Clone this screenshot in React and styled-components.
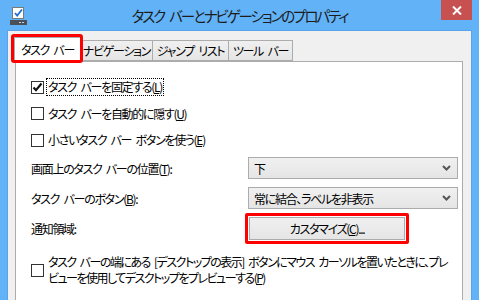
import React from 'react'
import styled, { createGlobalStyle } from 'styled-components'

const GlobalStyle = createGlobalStyle`
  html, body {
    margin: 0;
    padding: 0;
    background: #62b2f7;
  }
  body {
    font-family: "Noto Sans CJK JP", "Noto Sans", sans-serif;
    font-feature-settings: "palt";
    color: #000;
  }
`

const Window = styled.div`
  width: 479px;
  height: 300px;
  overflow: hidden;
  background: #62b2f7;
  display: flex;
  flex-direction: column;
`

const TitleBar = styled.div`
  height: 30px;
  flex: none;
  display: grid;
  grid-template-columns: 1fr auto 1fr;
  align-items: center;
`

const AppIcon = styled.svg`
  margin-left: 10px;
  margin-top: 1px;
  display: block;
`

const Title = styled.div`
  font-size: 14.5px;
  letter-spacing: -2.1px;
  word-spacing: 4px;
  color: #1c1c1c;
  padding-top: 1px;
  white-space: nowrap;
`

const CloseButton = styled.div`
  justify-self: end;
  align-self: start;
  margin-right: 7px;
  width: 31px;
  height: 20px;
  background: #c75050;
  display: flex;
  align-items: center;
  justify-content: center;
`

const Body = styled.div`
  flex: 1;
  margin: 0 7px;
  background: #f0f0f0;
  border: 1px solid #58a3ea;
  border-bottom: none;
  padding: 6px 8px 0 7px;
  display: flex;
  flex-direction: column;
  font-size: 12px;
  letter-spacing: -1.3px;
  word-spacing: 3px;
`

const TabRow = styled.div`
  display: flex;
  align-items: flex-end;
  height: 24px;
  margin-left: -1px;
`

const Tab = styled.div`
  position: relative;
  box-sizing: border-box;
  width: ${(p) => p.w}px;
  height: ${(p) => (p.active ? 25 : 21)}px;
  margin-left: ${(p) => (p.active ? 0 : -1)}px;
  margin-bottom: ${(p) => (p.active ? -1 : 0)}px;
  z-index: ${(p) => (p.active ? 2 : 1)};
  border: 1px solid #acacac;
  border-bottom: ${(p) => (p.active ? 'none' : '1px solid #acacac')};
  background: ${(p) => (p.active ? '#fff' : 'linear-gradient(#f0f0f0, #e5e5e5)')};
  display: flex;
  align-items: center;
  justify-content: center;
  padding-bottom: ${(p) => (p.active ? 2 : 0)}px;
  white-space: nowrap;
`

const TabMark = styled.span`
  position: absolute;
  top: -4px;
  left: -4px;
  right: -3px;
  bottom: -1px;
  border: 3px solid #ff0000;
  border-radius: 3px;
  pointer-events: none;
`

const Panel = styled.div`
  flex: 1;
  background: #fff;
  border: 1px solid #acacac;
  border-bottom: none;
  padding: 16px 0 0 15px;
  display: flex;
  flex-direction: column;
`

const CheckList = styled.div`
  display: flex;
  flex-direction: column;
  gap: 8.5px;
`

const CheckRow = styled.div`
  display: flex;
  align-items: center;
  height: 18px;
`

const Box = styled.span`
  box-sizing: border-box;
  width: 13px;
  height: 13px;
  flex: none;
  border: 1px solid #333;
  background: #fff;
  display: flex;
  align-items: center;
  justify-content: center;
  margin-right: 2px;
`

const Label = styled.span`
  padding: 0 1px;
  line-height: 16px;
  border: 1px dotted ${(p) => (p.focused ? '#000' : 'transparent')};
  white-space: nowrap;
`

const Settings = styled.div`
  display: grid;
  grid-template-columns: 217px 210px;
  grid-template-rows: 22px 22px 23px;
  row-gap: 8px;
  align-items: center;
  margin-top: 8px;
`

const Select = styled.div`
  box-sizing: border-box;
  height: 22px;
  border: 1px solid #acacac;
  background: linear-gradient(#f0f0f0, #e5e5e5);
  display: flex;
  align-items: center;
  justify-content: space-between;
  padding: 0 6px 0 5px;
  white-space: nowrap;
`

const Button = styled.div`
  position: relative;
  box-sizing: border-box;
  width: 156px;
  height: 23px;
  margin-left: 1px;
  margin-top: -1px;
  border: 1px solid #acacac;
  background: linear-gradient(#f0f0f0, #e5e5e5);
  display: flex;
  align-items: center;
  justify-content: center;
  white-space: nowrap;
`

const ButtonMark = styled.span`
  position: absolute;
  inset: -5px;
  border: 3px solid #ff0000;
  border-radius: 2px;
  pointer-events: none;
`

const WrapRow = styled.div`
  display: flex;
  align-items: center;
  margin-top: 14px;
`

const WrapText = styled.span`
  line-height: 16px;
  padding-left: 2px;
  letter-spacing: -1.5px;
  white-space: nowrap;
`

const Check = () => (
  <svg width="11" height="11" viewBox="0 0 11 11">
    <path d="M1.5 5.5 L4 8.2 L9.5 1.5" fill="none" stroke="#111" strokeWidth="2.2" />
  </svg>
)

const Chevron = () => (
  <svg width="9" height="6" viewBox="0 0 9 6">
    <path d="M1 1 L4.5 4.5 L8 1" fill="none" stroke="#555" strokeWidth="2" />
  </svg>
)

const tabs = [
  { label: 'タスク バー', w: 67, active: true },
  { label: 'ナビゲーション', w: 73 },
  { label: 'ジャンプ リスト', w: 77 },
  { label: 'ツール バー', w: 65 },
]

const App = () => {
  return (
    <Window>
      <GlobalStyle />
      <TitleBar>
        <AppIcon width="17" height="18" viewBox="0 0 17 18">
          <rect x="2.5" y="0.5" width="11" height="11" fill="#fff" stroke="#7a7a7a" />
          <path d="M5 6 L7.2 8.5 L12 2.5" fill="none" stroke="#1d6fd1" strokeWidth="1.8" />
          <rect x="0" y="13" width="17" height="5" fill="#4a4f58" />
          <rect x="9" y="15" width="2" height="1" fill="#c9d2dc" />
          <rect x="12" y="15" width="2" height="1" fill="#c9d2dc" />
        </AppIcon>
        <Title>タスク バーとナビゲーションのプロパティ</Title>
        <CloseButton>
          <svg width="10" height="9" viewBox="0 0 10 9">
            <path d="M1 0.5 L9 8.5 M9 0.5 L1 8.5" stroke="#fff" strokeWidth="2" />
          </svg>
        </CloseButton>
      </TitleBar>
      <Body>
        <TabRow>
          {tabs.map((t) => (
            <Tab key={t.label} w={t.w} active={t.active}>
              {t.label}
              {t.active && <TabMark />}
            </Tab>
          ))}
        </TabRow>
        <Panel>
          <CheckList>
            <CheckRow>
              <Box><Check /></Box>
              <Label focused>タスク バーを固定する(<u>L</u>)</Label>
            </CheckRow>
            <CheckRow>
              <Box />
              <Label>タスク バーを自動的に隠す(<u>U</u>)</Label>
            </CheckRow>
            <CheckRow>
              <Box />
              <Label>小さいタスク バー ボタンを使う(<u>E</u>)</Label>
            </CheckRow>
          </CheckList>
          <Settings>
            <span>画面上のタスク バーの位置(<u>T</u>):</span>
            <Select>
              <span>下</span>
              <Chevron />
            </Select>
            <span>タスク バーのボタン(<u>B</u>):</span>
            <Select>
              <span>常に結合、ラベルを非表示</span>
              <Chevron />
            </Select>
            <span>通知領域:</span>
            <Button>
              カスタマイズ(<u>C</u>)...
              <ButtonMark />
            </Button>
          </Settings>
          <WrapRow>
            <Box />
            <WrapText>
              タスク バーの端にある [デスクトップの表示] ボタンにマウス カーソルを置いたときに、プレ
              <br />
              ビューを使用してデスクトップをプレビューする(<u>P</u>)
            </WrapText>
          </WrapRow>
        </Panel>
      </Body>
    </Window>
  )
}

export default App
